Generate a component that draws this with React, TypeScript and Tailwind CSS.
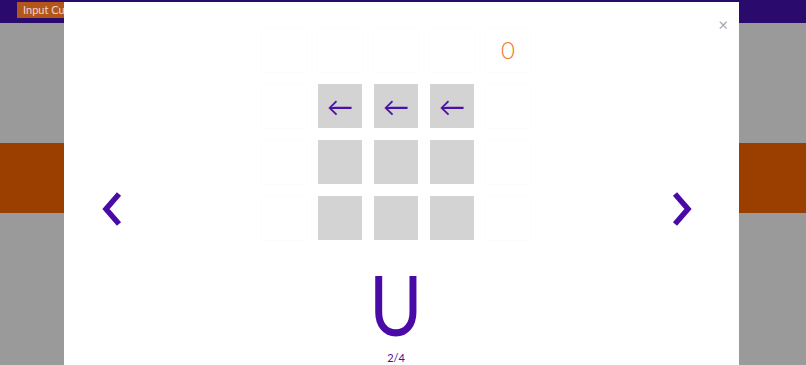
import React from 'react';

const FONT = { fontFamily: 'Lato, "Open Sans", sans-serif' };

const rows: string[][] = [
  ['', '', '', '', '0'],
  ['', '←', '←', '←', ''],
  ['', '', '', '', ''],
  ['', '', '', '', ''],
];

const Cell: React.FC<{ r: number; c: number; v: string }> = ({ r, c, v }) => {
  const inner = r > 0 && c > 0 && c < 4;
  return (
    <div
      className={
        'flex h-[44px] w-[44px] items-center justify-center ' +
        (inner ? 'bg-[#d3d3d3] text-[#4a10a8]' : 'bg-white shadow-[0_0_2px_rgba(0,0,0,0.04)] text-[#f07a1e]')
      }
    >
      {inner ? (
        <span className="text-[26px] leading-none">{v}</span>
      ) : (
        <span className="text-[24px] font-light leading-none">{v}</span>
      )}
    </div>
  );
};

const Chevron: React.FC<{ dir: 'left' | 'right' }> = ({ dir }) => (
  <svg width="20" height="34" viewBox="0 0 20 34">
    <polyline
      points={dir === 'left' ? '17,2 4,17 17,32' : '3,2 16,17 3,32'}
      fill="none"
      stroke="#4a0aa8"
      strokeWidth="5.5"
      strokeLinejoin="miter"
    />
  </svg>
);

export default function App() {
  return (
    <div className="relative h-[365px] w-full overflow-hidden bg-[#9a9a9a]" style={FONT}>
      {/* page behind the modal */}
      <div className="flex h-[23px] items-start bg-[#2a0a6c] pl-[17px] pt-[2px]">
        <button className="h-[16px] bg-[#b4561c] px-[6px] text-[11px] leading-[16px] text-[#e8d8cc]">
          Input Cube
        </button>
      </div>
      <div className="mt-[120px] h-[70px] bg-[#9a3f00]" />

      {/* modal */}
      <div className="absolute left-[64px] top-[2px] h-[400px] w-[675px] bg-white">
        <button className="absolute right-[11px] top-[14px] text-[17px] leading-none text-[#a8a8a8]">×</button>

        <div className="absolute left-[38px] top-[190px]"><Chevron dir="left" /></div>
        <div className="absolute left-[608px] top-[190px]"><Chevron dir="right" /></div>

        <div className="flex flex-col items-center pr-[11px] pt-[26px]">
          <div className="grid grid-cols-5 gap-[12px]">
            {rows.map((row, r) =>
              row.map((v, c) => <Cell key={r + '-' + c} r={r} c={c} v={v} />)
            )}
          </div>
          <div className="mt-[16px] scale-x-[0.86] text-[84px] font-normal leading-[96px] text-[#4a0aa8]">U</div>
          <div className="text-[11px] leading-[11px] text-[#4a0aa8]">2/4</div>
        </div>
      </div>
    </div>
  );
}
